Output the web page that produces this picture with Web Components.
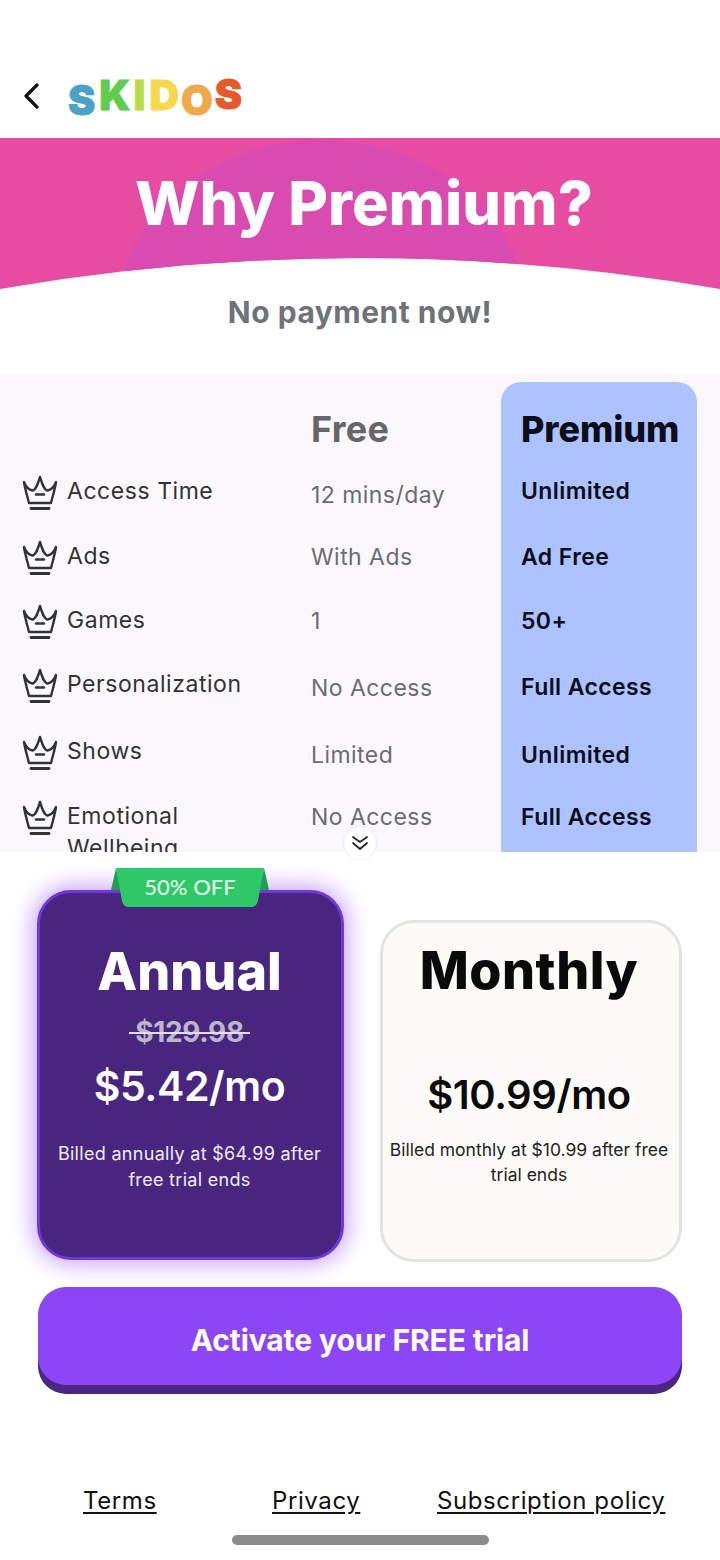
<!DOCTYPE html>
<html lang="en"><head><meta charset="utf-8"><title>SKIDOS Premium</title>
<style>html,body{margin:0;padding:0;background:#fff}</style></head>
<body>
<app-page>
  <top-bar></top-bar>
  <why-banner>Why Premium?</why-banner>
  <sub-title>No payment now!</sub-title>
  <compare-table>
    <compare-row row="2" icon-top="16" label-top="16" free-top="20" prem-top="16" label="Access Time" free="12 mins/day" premium="Unlimited"></compare-row>
    <compare-row row="3" icon-top="16" label-top="16" free-top="17" prem-top="17" label="Ads" free="With Ads" premium="Ad Free"></compare-row>
    <compare-row row="4" icon-top="16" label-top="16" free-top="17" prem-top="17" label="Games" free="1" premium="50+"></compare-row>
    <compare-row row="5" icon-top="16" label-top="16" free-top="20" prem-top="19" label="Personalization" free="No Access" premium="Full Access"></compare-row>
    <compare-row row="6" icon-top="16" label-top="16" free-top="20" prem-top="20" label="Shows" free="Limited" premium="Unlimited"></compare-row>
    <compare-row row="7" icon-top="16" label-top="16" free-top="17" prem-top="17" label="Emotional Wellbeing" free="No Access" premium="Full Access"></compare-row>
  </compare-table>
  <plan-section>
    <plan-card kind="annual" name="Annual" old="$129.98" price="$5.42/mo" note="Billed annually at $64.99 after free trial ends"></plan-card>
    <plan-card kind="monthly" name="Monthly" price="$10.99/mo" note="Billed monthly at $10.99 after free trial ends"></plan-card>
  </plan-section>
  <cta-button>Activate your FREE trial</cta-button>
  <foot-links></foot-links>
</app-page>
<script>
const BODY = '"Inter","Noto Sans",sans-serif';
const HEAD = '"Inter","Noto Sans",sans-serif';
function def(name, html, init){
  customElements.define(name, class extends HTMLElement{
    connectedCallback(){
      if(this.shadowRoot) return;
      const r=this.attachShadow({mode:'open'});
      r.innerHTML = typeof html==='function'? html(this): html;
      if(init) init(this,r);
    }
  });
}
def('app-page',`<style>:host{display:flex;flex-direction:column;width:720px;height:1560px;overflow:hidden;background:#fff;font-family:${BODY}}</style><slot></slot>`);
def('top-bar',`<style>
:host{display:flex;align-items:center;height:138px;box-sizing:border-box;padding:54px 0 0 23px;gap:28px}
svg{width:17px;height:26px;display:block;flex:none}
.logo{display:flex;font:900 41px/44px "Inter",sans-serif;height:44px;margin-top:-2px;-webkit-text-stroke:.8px currentColor}
.logo span{display:block}
</style>
<svg viewBox="0 0 17 26"><path d="M14 2 3 13l11 11" fill="none" stroke="#111" stroke-width="3.2" stroke-linecap="round" stroke-linejoin="round"/></svg>
<div class="logo"><span style="color:#4aa3c4;transform:translateY(5px);margin-right:4px">S</span><span style="color:#5fcb4f;margin-right:3px">K</span><span style="color:#b7dc45;margin-right:4px">I</span><span style="color:#f5d84c;margin-right:2px">D</span><span style="color:#efa94a;transform:translateY(5px);margin-right:2px">O</span><span style="color:#e6592b;transform:translateY(-1px)">S</span></div>`);
def('why-banner',`<style>
:host{display:flex;justify-content:center;position:relative;height:152px;box-sizing:border-box;padding:28px 0 0 8px;color:#fff;font:800 61px/74px ${HEAD};overflow:hidden}
svg{position:absolute;inset:0;width:720px;height:152px}
span{position:relative}
</style>
<svg viewBox="0 0 720 152"><defs><clipPath id="c"><path d="M0 0H720V151Q360 89 0 151Z"/></clipPath></defs><g clip-path="url(#c)"><rect width="720" height="152" fill="#e64da2"/><ellipse cx="322" cy="175" rx="204" ry="173" fill="#d94bb0"/></g></svg>
<span><slot></slot></span>`);
def('sub-title',`<style>:host{display:flex;justify-content:center;height:84px;box-sizing:border-box;padding-top:2px;color:#6f7377;font:700 30px/40px ${BODY};letter-spacing:.5px}</style><slot></slot>`);
def('compare-table',`<style>
:host{display:block;position:relative;height:478px;background:#faf8fd}
.clip{height:478px;overflow:hidden;box-sizing:border-box;padding-top:8px}
.grid{display:grid;grid-template-columns:22px 289px 190px 196px 23px;grid-template-rows:93px 65px 64px 64px 67px 65px 130px}
.blue{grid-column:4;grid-row:1/-1;background:#adc3ff;border-radius:20px 20px 0 0}
.h{grid-row:1;align-self:center;font:700 36px/44px ${HEAD}}
.f{grid-column:3;color:#666;letter-spacing:.3px}
.p{grid-column:4;color:#0b0d1a;padding-left:20px;font-weight:800;letter-spacing:-.1px}
.btn{position:absolute;left:344px;top:453px;width:32px;height:32px;border-radius:50%;background:#fff;box-shadow:0 0 3px #ddd;display:flex;align-items:center;justify-content:center}
.btn svg{width:20px;height:18px}
</style>
<div class="clip"><div class="grid"><div class="blue"></div><div class="h f">Free</div><div class="h p">Premium</div><slot></slot></div></div>
<div class="btn"><svg viewBox="0 0 20 18"><path d="M3 3l7 5 7-5M3 9l7 6 7-6" fill="none" stroke="#222" stroke-width="1.7" stroke-linecap="round" stroke-linejoin="round"/></svg></div>`);
const crown = `<svg viewBox="0 0 36 36" width="36" height="36"><g fill="none" stroke="#333" stroke-width="2.4" stroke-linecap="round" stroke-linejoin="round"><path d="M2 7c2 5 5 8 8.500 8.500C14 15 16 8 18 2c2 6 4 13 7.500 13.500C29 15 32 12 34 7c-1 7-3 13-5 21H7C5 20 3 14 2 7Z"/><path d="M14 19.500h8"/><path d="M9 33.500h18" stroke-width="2.800"/></g></svg>`;
def('compare-row',el=>{
 const a=n=>el.getAttribute(n), r=a('row');
 return `<style>
:host{display:contents}
div{grid-row:${r};font:400 23px/32px ${BODY}}
.i{grid-column:2;display:flex;align-items:flex-start;gap:9px;box-sizing:border-box;color:#333;letter-spacing:.55px}
.i svg{flex:none;margin-top:${a('icon-top')-16}px}
.i span{display:block;max-width:190px;padding-top:${a('label-top')-16}px}
.f{grid-column:3;color:#6c6c70;padding-top:${a('free-top')-16}px;letter-spacing:.45px}
.p{grid-column:4;padding-left:20px;color:#0b0d1a;font-weight:600;letter-spacing:.4px;padding-top:${a('prem-top')-16}px}
</style><div class="i">${crown}<span>${a('label')}</span></div><div class="f">${a('free')}</div><div class="p">${a('premium')}</div>`});
def('plan-section',`<style>:host{display:grid;grid-template-columns:307px 302px;gap:36px;padding:38px 37px 0;height:407px;box-sizing:border-box;background:#fff;align-items:start}</style><slot></slot>`);
def('plan-card',el=>{
 const a=n=>el.getAttribute(n), an=a('kind')==='annual';
 return `<style>
:host{display:flex;flex-direction:column;align-items:center;position:relative;box-sizing:border-box;text-align:center;
 height:${an?370:342}px;margin-top:${an?0:30}px;border-radius:34px;
 padding-right:${an?2:4}px;
 border:3px solid ${an?'#7038dc':'#e3e3e3'};background:${an?'#482680':'#fdfbf8'};color:${an?'#fff':'#0a0a0a'};
 ${an?'box-shadow:0 0 22px 4px rgba(160,100,255,.6);':''}}
.n{font:800 52px/64px ${HEAD};letter-spacing:${an?'0':'.5px'};margin-top:${an?47:16}px}
.o{position:relative;font:700 28px/36px ${BODY};color:#bdb5c9;margin-top:10px;letter-spacing:-.3px}
.o::after{content:"";position:absolute;left:-6px;right:-6px;top:18px;height:2px;background:#e4def0}
.pr{font:600 ${an?41:40}px/50px ${BODY};letter-spacing:-.4px;margin-top:${an?11:67}px}
.t{font:400 ${an?18:17.5}px/${an?26:25}px ${BODY};margin:${an?'30px 8px 0':'17px 0 0'};color:${an?'#f2ecfa':'#222'};letter-spacing:${an?'.3px':'0'}}
.badge{position:absolute;left:71px;top:-25px;width:158px;height:42px}
.badge span{position:absolute;left:0;right:0;top:5px;text-align:center;font:500 22px/28px "Lato",sans-serif;color:#e6fbec}
</style>
${an?`<div class="badge"><svg viewBox="0 0 158 42" width="158" height="42"><path d="M5 0 0 22h10z" fill="#1f9e52"/><path d="M153 0l5 22h-10z" fill="#1f9e52"/><path d="M5 0h148l-6 33c-1 3-3 6-6 6H17c-3 0-5-3-6-6z" fill="#2ec866"/></svg><span>50% OFF</span></div>`:''}
<div class="n">${a('name')}</div>${a('old')?`<div class="o">${a('old')}</div>`:''}<div class="pr">${a('price')}</div><div class="t">${a('note')}</div>`});
def('cta-button',`<style>
:host{display:flex;align-items:center;justify-content:center;box-sizing:border-box;margin:28px 38px 0;padding-top:8px;height:98px;flex:none;border-radius:28px;background:#8c46f6;box-shadow:0 9px 0 #4b2783;color:#fff;font:700 30px/40px ${HEAD};letter-spacing:-.1px}
</style><slot></slot>`);
def('foot-links',`<style>
:host{display:block}
.l{display:grid;grid-template-columns:189px 165px 1fr;padding:100px 0 0 83px;font:400 24px/32px ${BODY};color:#111;letter-spacing:.6px}
u{text-underline-offset:3px}
.b{width:257px;height:10px;border-radius:5px;background:#8c8c8c;margin:18px auto 0}
</style><div class="l"><u>Terms</u><u>Privacy</u><u>Subscription policy</u></div><div class="b"></div>`);
</script>
</body></html>
